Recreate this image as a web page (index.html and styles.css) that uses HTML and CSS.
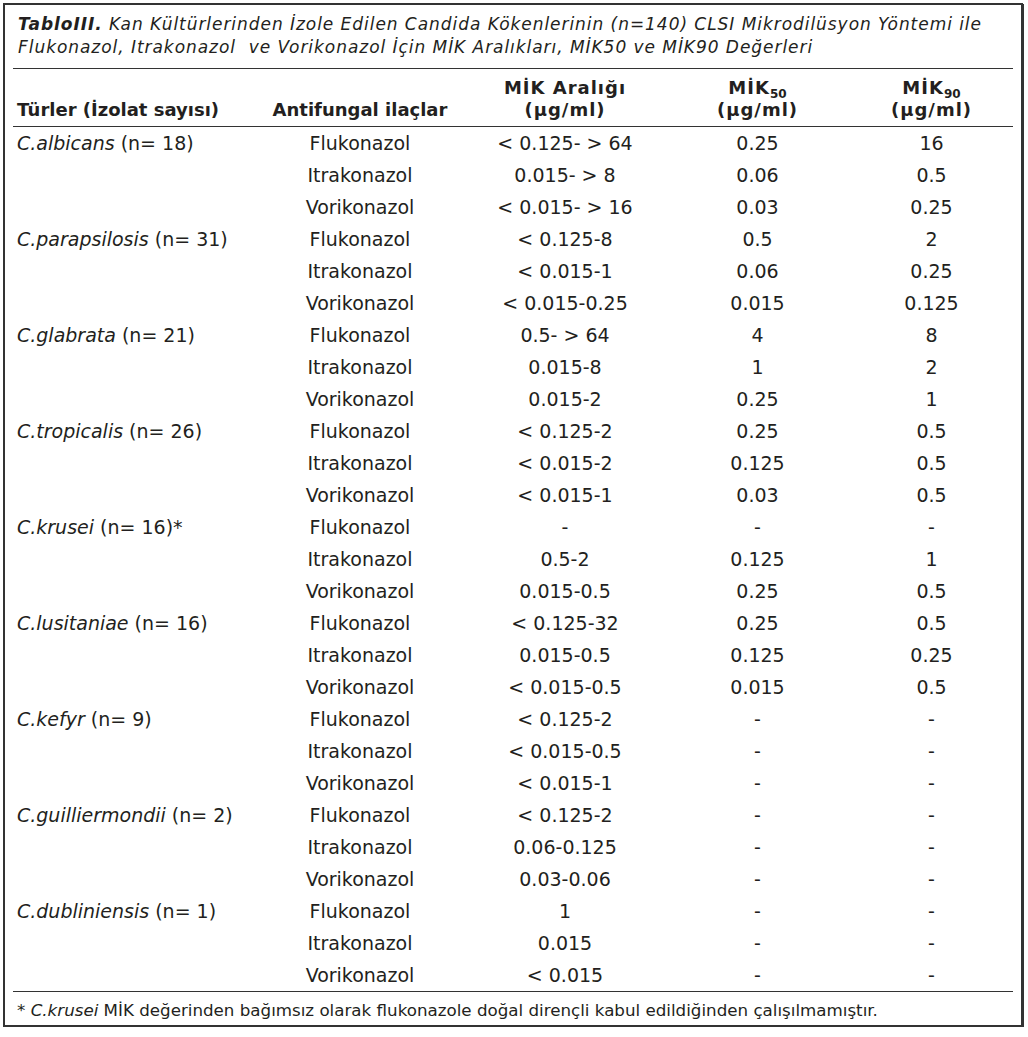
FILE: index.html
```html
<!DOCTYPE html>
<html lang="tr">
<head>
<meta charset="utf-8">
<title>Tablo III</title>
<link rel="stylesheet" href="styles.css">
</head>
<body>
<div class="frame">
  <p class="caption"><b>TabloIII.</b> Kan Kültürlerinden İzole Edilen Candida Kökenlerinin (n=140) CLSI Mikrodilüsyon Yöntemi ile<br>Flukonazol, Itrakonazol&nbsp; ve Vorikonazol İçin MİK Aralıkları, MİK50 ve MİK90 Değerleri</p>
  <table class="mic">
    <colgroup>
      <col class="c1"><col class="c2"><col class="c3"><col class="c4"><col class="c5">
    </colgroup>
    <thead>
      <tr>
        <th class="left">Türler (İzolat sayısı)</th>
        <th>Antifungal ilaçlar</th>
        <th class="wide">MİK Aralığı<br>(µg/ml)</th>
        <th class="wide">MİK<sub>50</sub><br>(µg/ml)</th>
        <th class="wide">MİK<sub>90</sub><br>(µg/ml)</th>
      </tr>
    </thead>
    <tbody>
      <tr><td class="left"><i>C.albicans</i> (n= 18)</td><td>Flukonazol</td><td>&lt; 0.125- &gt; 64</td><td>0.25</td><td>16</td></tr>
      <tr><td class="left"></td><td>Itrakonazol</td><td>0.015- &gt; 8</td><td>0.06</td><td>0.5</td></tr>
      <tr><td class="left"></td><td>Vorikonazol</td><td>&lt; 0.015- &gt; 16</td><td>0.03</td><td>0.25</td></tr>
      <tr><td class="left"><i>C.parapsilosis</i> (n= 31)</td><td>Flukonazol</td><td>&lt; 0.125-8</td><td>0.5</td><td>2</td></tr>
      <tr><td class="left"></td><td>Itrakonazol</td><td>&lt; 0.015-1</td><td>0.06</td><td>0.25</td></tr>
      <tr><td class="left"></td><td>Vorikonazol</td><td>&lt; 0.015-0.25</td><td>0.015</td><td>0.125</td></tr>
      <tr><td class="left"><i>C.glabrata</i> (n= 21)</td><td>Flukonazol</td><td>0.5- &gt; 64</td><td>4</td><td>8</td></tr>
      <tr><td class="left"></td><td>Itrakonazol</td><td>0.015-8</td><td>1</td><td>2</td></tr>
      <tr><td class="left"></td><td>Vorikonazol</td><td>0.015-2</td><td>0.25</td><td>1</td></tr>
      <tr><td class="left"><i>C.tropicalis</i> (n= 26)</td><td>Flukonazol</td><td>&lt; 0.125-2</td><td>0.25</td><td>0.5</td></tr>
      <tr><td class="left"></td><td>Itrakonazol</td><td>&lt; 0.015-2</td><td>0.125</td><td>0.5</td></tr>
      <tr><td class="left"></td><td>Vorikonazol</td><td>&lt; 0.015-1</td><td>0.03</td><td>0.5</td></tr>
      <tr><td class="left"><i>C.krusei</i> (n= 16)*</td><td>Flukonazol</td><td>-</td><td>-</td><td>-</td></tr>
      <tr><td class="left"></td><td>Itrakonazol</td><td>0.5-2</td><td>0.125</td><td>1</td></tr>
      <tr><td class="left"></td><td>Vorikonazol</td><td>0.015-0.5</td><td>0.25</td><td>0.5</td></tr>
      <tr><td class="left"><i>C.lusitaniae</i> (n= 16)</td><td>Flukonazol</td><td>&lt; 0.125-32</td><td>0.25</td><td>0.5</td></tr>
      <tr><td class="left"></td><td>Itrakonazol</td><td>0.015-0.5</td><td>0.125</td><td>0.25</td></tr>
      <tr><td class="left"></td><td>Vorikonazol</td><td>&lt; 0.015-0.5</td><td>0.015</td><td>0.5</td></tr>
      <tr><td class="left"><i>C.kefyr</i> (n= 9)</td><td>Flukonazol</td><td>&lt; 0.125-2</td><td>-</td><td>-</td></tr>
      <tr><td class="left"></td><td>Itrakonazol</td><td>&lt; 0.015-0.5</td><td>-</td><td>-</td></tr>
      <tr><td class="left"></td><td>Vorikonazol</td><td>&lt; 0.015-1</td><td>-</td><td>-</td></tr>
      <tr><td class="left"><i>C.guilliermondii</i> (n= 2)</td><td>Flukonazol</td><td>&lt; 0.125-2</td><td>-</td><td>-</td></tr>
      <tr><td class="left"></td><td>Itrakonazol</td><td>0.06-0.125</td><td>-</td><td>-</td></tr>
      <tr><td class="left"></td><td>Vorikonazol</td><td>0.03-0.06</td><td>-</td><td>-</td></tr>
      <tr><td class="left"><i>C.dubliniensis</i> (n= 1)</td><td>Flukonazol</td><td>1</td><td>-</td><td>-</td></tr>
      <tr><td class="left"></td><td>Itrakonazol</td><td>0.015</td><td>-</td><td>-</td></tr>
      <tr><td class="left"></td><td>Vorikonazol</td><td>&lt; 0.015</td><td>-</td><td>-</td></tr>
    </tbody>
  </table>
  <p class="note">* <i>C.krusei</i> MİK değerinden bağımsız olarak flukonazole doğal dirençli kabul edildiğinden çalışılmamıştır.</p>
</div>
</body>
</html>
```

FILE: styles.css
```css
html, body {
  margin: 0;
  padding: 0;
  background: #ffffff;
}

body {
  font-family: "DejaVu Sans", "Liberation Sans", sans-serif;
  color: #231f20;
}

.frame {
  box-sizing: border-box;
  width: 1020px;
  height: 1024px;
  margin: 3px 0 0 3px;
  padding: 0 8px;
  border: 2px solid #333333;
  box-shadow: 1px 1px 0 #333333;
  display: flex;
  flex-direction: column;
}

.caption {
  margin: 0;
  padding: 8px 5px 9px;
  font-size: 17px;
  line-height: 23px;
  font-style: italic;
  letter-spacing: 0.95px;
  white-space: nowrap;
  border-bottom: 1px solid #333333;
}

.caption b {
  font-weight: 700;
}

.mic {
  width: 1000px;
  border-collapse: collapse;
  table-layout: fixed;
  font-size: 19px;
}

.c1 { width: 242px; }
.c2 { width: 210px; }
.c3 { width: 200px; }
.c4 { width: 185px; }
.c5 { width: 163px; }

.mic th {
  font-size: 18px;
  font-weight: 700;
  text-align: center;
  vertical-align: bottom;
  line-height: 22px;
  height: 52px;
  padding: 0 0 5px;
  border-bottom: 1px solid #333333;
}

.mic th.wide {
  letter-spacing: 1px;
}

.mic th sub {
  font-size: 12px;
  line-height: 0;
  vertical-align: -4px;
  letter-spacing: 0;
}

.mic td {
  text-align: center;
  height: 32px;
  padding: 0;
  line-height: 32px;
  white-space: nowrap;
}

.mic .left {
  text-align: left;
  padding-left: 4px;
}

.mic tbody tr:last-child td {
  border-bottom: 1px solid #333333;
}

.note {
  margin: 0;
  padding: 6px 4px 0;
  font-size: 16.7px;
  line-height: 24px;
  white-space: nowrap;
}
```
